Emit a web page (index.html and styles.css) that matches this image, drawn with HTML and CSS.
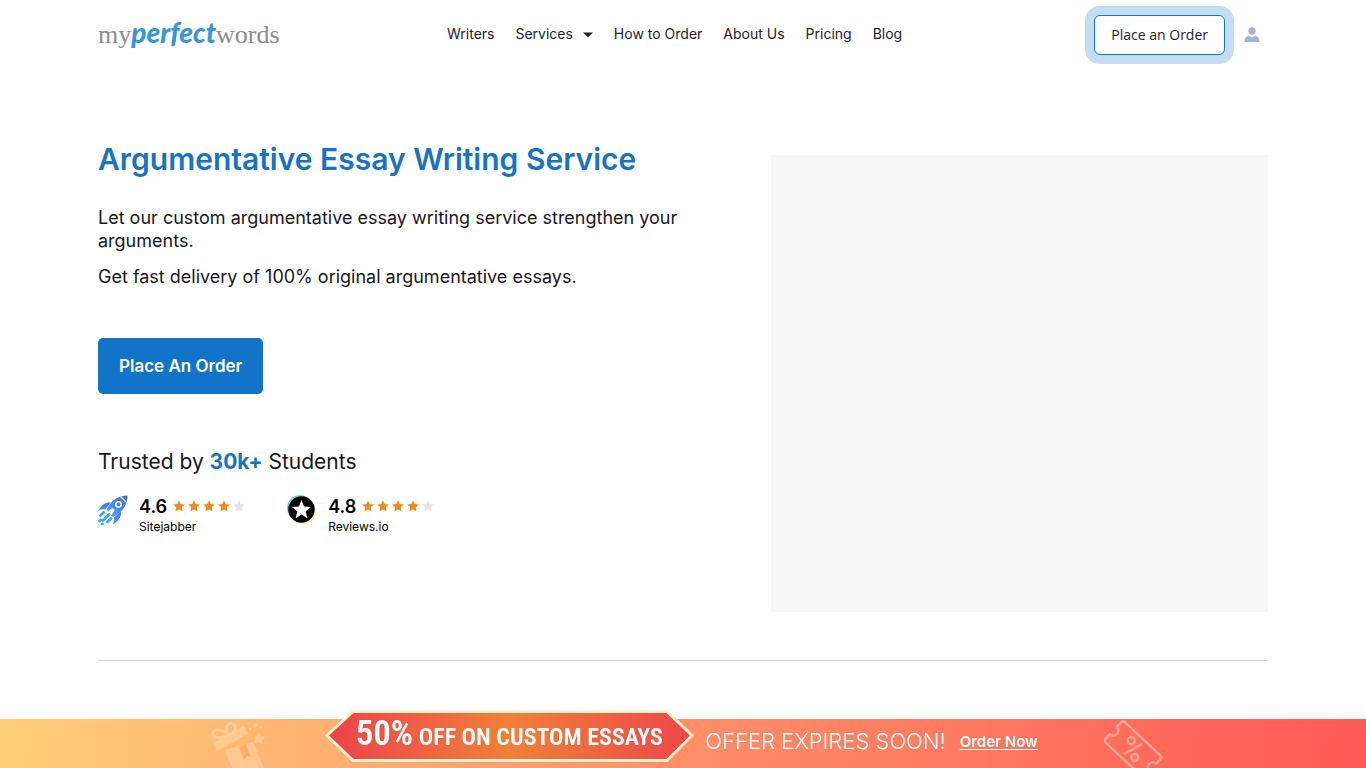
FILE: index.html
```html
<!DOCTYPE html>
<html lang="en">
<head>
<meta charset="utf-8">
<meta name="viewport" content="width=device-width, initial-scale=1">
<title>Argumentative Essay Writing Service</title>
<link rel="stylesheet" href="styles.css">
</head>
<body>
<svg class="defs" width="0" height="0" aria-hidden="true">
  <symbol id="star" viewBox="0 0 12 12"><path d="M6 .3 7.700 4l4.100.5-3 2.800.8 4.100L6 9.400 2.400 11.400l.8-4.100-3-2.800L4.300 4z" fill="currentColor"/></symbol>
</svg>
<header class="container header">
  <a class="logo" href="#" aria-label="myperfectwords"><span>my</span><b>perfect</b><span>words</span></a>
  <nav class="nav">
    <a href="#">Writers</a>
    <a href="#" class="has-menu">Services <svg width="10" height="6" viewBox="0 0 10 6" aria-hidden="true"><path d="M0 .5h10L5 5.500z" fill="currentColor"/></svg></a>
    <a href="#">How to Order</a>
    <a href="#">About Us</a>
    <a href="#">Pricing</a>
    <a href="#">Blog</a>
  </nav>
  <div class="account">
    <button type="button" class="order-outline">Place an Order</button>
    <a class="user" href="#" aria-label="Account"><svg width="16" height="16" viewBox="0 0 16 16"><g fill="#a3b0d8"><circle cx="8" cy="4" r="3.700"/><path d="M.5 15c0-4 2-6 4.500-6.500C6 10.500 10 10.500 11 8.500c2.500.5 4.500 2.500 4.500 6.500z"/></g></svg></a>
  </div>
</header>
<main class="container">
  <section class="hero">
    <div class="intro">
      <h1>Argumentative Essay Writing Service</h1>
      <p>Let our custom argumentative essay writing service strengthen your arguments.</p>
      <p>Get fast delivery of 100% original argumentative essays.</p>
      <button type="button" class="order-main">Place An Order</button>
      <h2>Trusted by <strong>30k+</strong> Students</h2>
      <div class="ratings">
        <div class="rating">
          <svg width="30" height="30" viewBox="0 0 30 30" aria-hidden="true">
            <defs><linearGradient id="rk" x1="1" y1="0" x2="0" y2="1"><stop offset="0" stop-color="#4a62ea"/><stop offset=".5" stop-color="#4a86f5"/><stop offset="1" stop-color="#35b8fb"/></linearGradient></defs>
            <g fill="url(#rk)"><path d="M29.500.5C21 .5 14 4 8.500 14.500l1.500 2 3-2.500c2.500-1.500 4.500.5 3 2.500L13 20.500l2 1.500C25 17.500 29.500 9 29.500.5z"/><path d="M13 7.500C7 7 3 10 0 16.500c2-2 4.500-2.500 7-2zM23 16.500c.5 5-2 9.500-8.500 13 2-2.500 2-5 1.500-7z"/></g>
            <path d="m22.500 1.500 6 6" stroke="#fff" stroke-width="1.200"/><circle cx="20.500" cy="9.500" r="2.700" fill="none" stroke="#fff" stroke-width="1.500"/>
            <path d="m5.500 17.500-3 3m8.500-1-6 6m8-2-3.500 3.500m-7-2-1 1m3 3-.5.5" stroke="#38a9fb" stroke-width="2.800" stroke-linecap="round"/>
          </svg>
          <div><div class="score"><b>4.6</b><span class="stars" role="img" aria-label="4 of 5 stars"><svg><use href="#star"/></svg><svg><use href="#star"/></svg><svg><use href="#star"/></svg><svg><use href="#star"/></svg><svg class="off"><use href="#star"/></svg></span></div><div class="site">Sitejabber</div></div>
        </div>
        <div class="rating">
          <svg width="30" height="30" viewBox="0 0 30 30" aria-hidden="true"><circle cx="13" cy="13" r="13" fill="#68d6d0"/><circle cx="16" cy="16" r="13" fill="#fff3a8"/><circle cx="14.500" cy="14.500" r="13.200" fill="#000"/><path d="m14.500 5 2.600 6.500 6.900.5-5.300 4.500 1.700 6.800-5.900-3.700-5.900 3.700 1.700-6.800L5 12l6.900-.5z" fill="#fff"/></svg>
          <div><div class="score"><b>4.8</b><span class="stars" role="img" aria-label="4 of 5 stars"><svg><use href="#star"/></svg><svg><use href="#star"/></svg><svg><use href="#star"/></svg><svg><use href="#star"/></svg><svg class="off"><use href="#star"/></svg></span></div><div class="site">Reviews.io</div></div>
        </div>
      </div>
    </div>
    <div class="media"></div>
  </section>
</main>
<aside class="promo">
  <svg class="gift" width="56" height="48" viewBox="0 0 56 48" aria-hidden="true"><g fill="#ffd3a0" opacity=".65"><path d="m2 23 31-17 4 8L6 31z"/><path d="m14 30 28-8 11 26H21z"/><path d="m48 12 2 4 4 1-3 3v4l-4-2-4 1 2-4-2-4 4 1z"/><circle cx="44" cy="5" r="2"/><circle cx="39" cy="9" r="1.500"/><circle cx="50" cy="7" r="1"/></g><g fill="none" stroke="#ffd3a0" stroke-width="3" opacity=".75"><path d="M17 15C9 19 1 18 2 13s12-3 15 2zm0 0C13 7 17 1 22 4s1 10-5 11z"/></g><path d="m28 27 5 13 3-4 4 1-5-13z" fill="#ffae69"/></svg>
  <div class="ribbon">
    <svg viewBox="0 0 370 52" aria-hidden="true"><defs><linearGradient id="rb"><stop offset="0" stop-color="#ed414b"/><stop offset=".5" stop-color="#ef8038"/><stop offset="1" stop-color="#ed4748"/></linearGradient></defs><path d="M29 1.500h314l25 24-25 25H29L3 25.500z" fill="url(#rb)" stroke="#fff0cf" stroke-width="3"/></svg>
    <span class="deal"><b>50%</b> OFF ON CUSTOM ESSAYS</span>
  </div>
  <span class="expires">OFFER EXPIRES SOON!</span>
  <a href="#">Order Now</a>
  <svg class="ticket" width="60" height="48" viewBox="0 0 60 48" aria-hidden="true"><g transform="rotate(43 29 29)" fill="none" stroke="#ffa48f" stroke-width="2.500"><path d="M5 15h48q3 0 3 3v6a5 5 0 0 0 0 10v6q0 3-3 3H5q-3 0-3-3v-6a5 5 0 0 0 0-10v-6q0-3 3-3z" stroke-linejoin="round"/><circle cx="22" cy="24" r="3.500"/><circle cx="36" cy="34" r="3.500"/><path d="M29 19v20" transform="rotate(18 29 29)"/></g></svg>
</aside>
</body>
</html>
```
FILE: styles.css
```css
* { box-sizing: border-box; }
body { margin: 0; background: #fff; color: #17171f; font-family: Inter, "Liberation Sans", sans-serif; }
button { font: inherit; cursor: pointer; }
svg { flex: none; }
.defs { position: absolute; }
.container { width: calc(100% - 40px); max-width: 1170px; margin: 0 auto; }

.header { display: grid; grid-template-columns: 349px 1fr auto; align-items: center; padding-top: 14px; }
.logo { display: flex; align-items: baseline; padding-bottom: 2px; color: #8d8d8d; text-decoration: none; font: 26px/36px "Liberation Serif", serif; }
.logo b { color: #3a96da; font: italic 900 28px/36px Lato, sans-serif; }
.nav { display: flex; gap: 21px; align-items: center; padding-bottom: 2px; }
.nav a { color: #22222e; font-size: 14px; line-height: 20px; text-decoration: none; white-space: nowrap; }
.has-menu svg { margin: 0 0 1px 6px; }
.account { display: flex; align-items: center; gap: 19px; padding-right: 8px; }
.order-outline { height: 40px; padding: 0 16px; background: #fff; color: #22222e; border: 1px solid #1274c9; border-radius: 6px; box-shadow: 0 0 0 9px #c3def3; font: 14px/20px "Open Sans", sans-serif; }
.user { display: flex; }

.hero { display: grid; grid-template-columns: 1fr 497px; gap: 72px; padding: 84px 0 48px; border-bottom: 1px solid #c9d8e0; }
h1 { margin: 0 0 27px; color: #1873c4; font-size: 30px; line-height: 40px; font-weight: 600; white-space: nowrap; }
.intro p { margin: 0 0 13px; font-size: 18px; line-height: 23px; }
.order-main { height: 56px; margin: 50px 0 52px; padding: 0 21px; border: 0; border-radius: 5px; background: #1274c9; color: #fff; font-size: 17px; font-weight: 600; display: block; }
h2 { margin: 0 0 17px; font-size: 21px; line-height: 32px; font-weight: 400; }
h2 strong { color: #1873c4; }
.media { margin-top: 16px; min-height: 457px; background: #f7f7f7; }
.ratings { display: flex; gap: 42px; }
.rating { display: flex; gap: 11px; color: #000; }
.score { display: flex; align-items: center; gap: 6px; height: 22px; font-size: 18px; }
.score b { font-weight: 600; }
.stars { display: flex; gap: 3px; color: #f28a1e; }
.stars svg { width: 12px; height: 12px; }
.stars .off { color: #e3e4e7; }
.site { font-size: 12px; line-height: 20px; }

.promo { position: fixed; left: 0; right: 0; bottom: 0; height: 49px; padding-left: 9px; display: flex; justify-content: center; align-items: center; color: #fff; background: linear-gradient(100deg, #ffcf78, #ff8f68 50%, #ff5955); }
.gift { margin-right: 57px; }
.ribbon { display: grid; place-items: center; margin: -16px 11px 0 0; height: 52px; width: 370px; }
.ribbon > * { grid-area: 1 / 1; }
.ribbon svg { width: 370px; height: 52px; }
.deal { font: 600 24px/40px "Roboto Condensed", Roboto, sans-serif; white-space: nowrap; }
.deal b { font-size: 35px; font-weight: 600; }
.expires, .promo a { padding-bottom: 5px; white-space: nowrap; }
.expires { font-size: 22px; font-weight: 300; }
.promo a { margin: 0 66px 0 14px; color: #fff; font-size: 15px; font-weight: 600; text-underline-offset: 2px; }
```
